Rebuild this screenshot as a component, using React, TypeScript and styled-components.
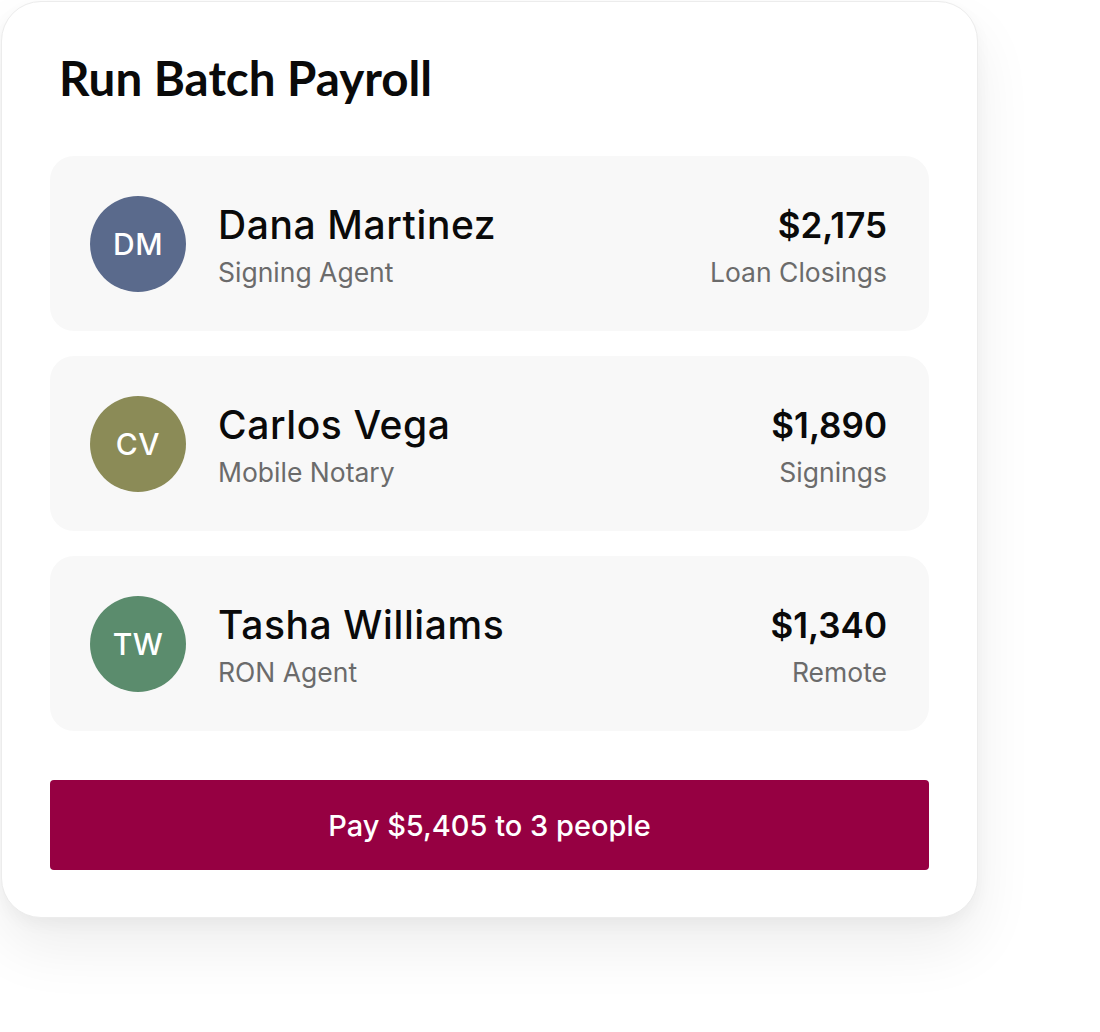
import React from "react";
import styled, { createGlobalStyle } from "styled-components";

const GlobalStyle = createGlobalStyle`
  html, body {
    margin: 0;
    padding: 0;
    background: #ffffff;
  }
  body {
    font-family: "Inter", "Noto Sans", sans-serif;
    color: #0a0a0a;
    -webkit-font-smoothing: antialiased;
  }
`;

const Page = styled.div`
  min-height: 1032px;
  box-sizing: border-box;
  padding: 1px 0 0 1px;
`;

const Card = styled.section`
  width: 977px;
  box-sizing: border-box;
  background: #ffffff;
  border: 1px solid #ececec;
  border-radius: 40px;
  box-shadow: 0 30px 60px rgba(0, 0, 0, 0.07), 0 6px 16px rgba(0, 0, 0, 0.04);
  padding: 48px 48px 47px;
  display: flex;
  flex-direction: column;
`;

const Title = styled.h1`
  margin: 0 0 50px;
  padding-left: 9px;
  font-family: "Lato", "Inter", sans-serif;
  font-weight: 700;
  font-size: 47.5px;
  line-height: 56px;
  color: #0a0a0a;
`;

const List = styled.div`
  display: flex;
  flex-direction: column;
  gap: 25px;
`;

const Row = styled.div`
  height: 175px;
  box-sizing: border-box;
  background: #f8f8f8;
  border-radius: 24px;
  padding: 0 42px 0 40px;
  display: flex;
  align-items: center;
`;

const Avatar = styled.div<{ $bg: string }>`
  width: 96px;
  height: 96px;
  border-radius: 50%;
  background: ${(p) => p.$bg};
  color: #ffffff;
  display: flex;
  align-items: center;
  justify-content: center;
  font-size: 30px;
  font-weight: 500;
  letter-spacing: 0.5px;
  flex-shrink: 0;
`;

const Person = styled.div`
  margin-left: 32px;
  padding-top: 4px;
  display: flex;
  flex-direction: column;
  gap: 9px;
  flex: 1;
`;

const Name = styled.div`
  font-size: 39px;
  line-height: 44px;
  font-weight: 500;
  letter-spacing: 0.6px;
  color: #0a0a0a;
`;

const Sub = styled.div`
  font-size: 26.5px;
  line-height: 32px;
  font-weight: 400;
  color: #6b6b6b;
`;

const Pay = styled.div`
  padding-top: 5px;
  display: flex;
  flex-direction: column;
  align-items: flex-end;
  gap: 11px;
`;

const Amount = styled.div`
  font-size: 35px;
  line-height: 40px;
  font-weight: 600;
  color: #0a0a0a;
`;

const PayButton = styled.button`
  margin-top: 49px;
  height: 90px;
  width: 100%;
  border: none;
  border-radius: 4px;
  background: #960042;
  color: #ffffff;
  font-family: "Inter", "Noto Sans", sans-serif;
  font-size: 29px;
  font-weight: 500;
  cursor: pointer;
`;

type Entry = {
  initials: string;
  name: string;
  role: string;
  amount: number;
  category: string;
  color: string;
};

const entries: Entry[] = [
  { initials: "DM", name: "Dana Martinez", role: "Signing Agent", amount: 2175, category: "Loan Closings", color: "#5a6a8c" },
  { initials: "CV", name: "Carlos Vega", role: "Mobile Notary", amount: 1890, category: "Signings", color: "#8b8b57" },
  { initials: "TW", name: "Tasha Williams", role: "RON Agent", amount: 1340, category: "Remote", color: "#5b8c6d" },
];

const fmt = (n: number) => "$" + n.toLocaleString("en-US");

export default function App() {
  const total = entries.reduce((s, e) => s + e.amount, 0);
  return (
    <Page>
      <GlobalStyle />
      <Card>
        <Title>Run Batch Payroll</Title>
        <List>
          {entries.map((e) => (
            <Row key={e.initials}>
              <Avatar $bg={e.color}>{e.initials}</Avatar>
              <Person>
                <Name>{e.name}</Name>
                <Sub>{e.role}</Sub>
              </Person>
              <Pay>
                <Amount>{fmt(e.amount)}</Amount>
                <Sub>{e.category}</Sub>
              </Pay>
            </Row>
          ))}
        </List>
        <PayButton>
          Pay {fmt(total)} to {entries.length} people
        </PayButton>
      </Card>
    </Page>
  );
}
